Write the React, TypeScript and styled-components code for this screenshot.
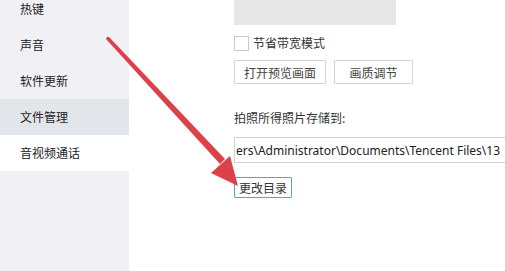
import * as React from "react";
import styled, { createGlobalStyle } from "styled-components";

const Global = createGlobalStyle`
  html, body {
    margin: 0;
    padding: 0;
    background: #fff;
  }
  body {
    font-family: "Noto Sans CJK SC", "Noto Sans", sans-serif;
    font-size: 12px;
    color: #333;
  }
`;

const Page = styled.div`
  position: relative;
  display: flex;
  width: 505px;
  height: 271px;
  overflow: hidden;
`;

const Sidebar = styled.ul`
  list-style: none;
  margin: 0;
  padding: 0;
  width: 129px;
  flex: 0 0 129px;
  background: #f1f0f5;
  display: flex;
  flex-direction: column;
  margin-top: -9px;
  height: calc(100% + 9px);
`;

const NavItem = styled.li<{ state?: "selected" | "hover" }>`
  height: 36px;
  line-height: 36px;
  padding-left: 20px;
  color: #222;
  background: ${(p) =>
    p.state === "selected" ? "#e2e5ea" : p.state === "hover" ? "#ffffff" : "transparent"};
`;

const Content = styled.div`
  flex: 1;
  padding-left: 105px;
  display: flex;
  flex-direction: column;
  align-items: flex-start;
`;

const Preview = styled.div`
  width: 162px;
  height: 25px;
  background: #e7e7e8;
`;

const CheckRow = styled.label`
  display: flex;
  align-items: center;
  gap: 4px;
  margin-top: 11px;
  height: 14px;
  line-height: 14px;
`;

const Box = styled.span`
  width: 13px;
  height: 13px;
  border: 1px solid #c9c9c9;
  background: #fff;
`;

const ButtonRow = styled.div`
  display: flex;
  gap: 8px;
  margin-top: 10px;
`;

const Button = styled.button<{ focused?: boolean }>`
  font: inherit;
  color: #444;
  background: #fff;
  height: 24px;
  min-width: 79px;
  padding: 0 9px;
  border: 1px solid ${(p) => (p.focused ? "#6a9fae" : "#d3d3d3")};
  border-radius: 1px;
  cursor: pointer;
`;

const SmallButton = styled(Button)`
  height: 21px;
  min-width: 0;
  padding: 0 4px;
  color: #333;
`;

const Label = styled.div`
  margin-top: 26px;
  line-height: 16px;
`;

const PathField = styled.div`
  margin-top: 11px;
  width: 271px;
  height: 26px;
  box-sizing: border-box;
  border: 1px solid #d2d2d2;
  border-right: none;
  display: flex;
  align-items: center;
  padding-left: 1px;
  overflow: hidden;
  white-space: nowrap;
  font-family: "Noto Sans", "Noto Sans CJK SC", sans-serif;
  font-size: 12px;
  color: #222;
`;

const ChangeRow = styled.div`
  margin-top: 14px;
`;

const Overlay = styled.svg`
  position: absolute;
  left: 0;
  top: 0;
  pointer-events: none;
`;

function Arrow() {
  return (
    <Overlay width="505" height="271" viewBox="0 0 505 271">
      <polygon points="107,37 109,37 225,159 220,164 106,39" fill="#dc4049" />
      <polygon points="238,186 230,156 211,173" fill="#dc4049" />
    </Overlay>
  );
}

export default function App() {
  return (
    <Page>
      <Global />
      <Sidebar>
        <NavItem>热键</NavItem>
        <NavItem>声音</NavItem>
        <NavItem>软件更新</NavItem>
        <NavItem state="selected">文件管理</NavItem>
        <NavItem state="hover">音视频通话</NavItem>
      </Sidebar>
      <Content>
        <Preview />
        <CheckRow>
          <Box />
          节省带宽模式
        </CheckRow>
        <ButtonRow>
          <Button>打开预览画面</Button>
          <Button>画质调节</Button>
        </ButtonRow>
        <Label>拍照所得照片存储到:</Label>
        <PathField>ers\Administrator\Documents\Tencent Files\13</PathField>
        <ChangeRow>
          <SmallButton focused>更改目录</SmallButton>
        </ChangeRow>
      </Content>
      <Arrow />
    </Page>
  );
}
